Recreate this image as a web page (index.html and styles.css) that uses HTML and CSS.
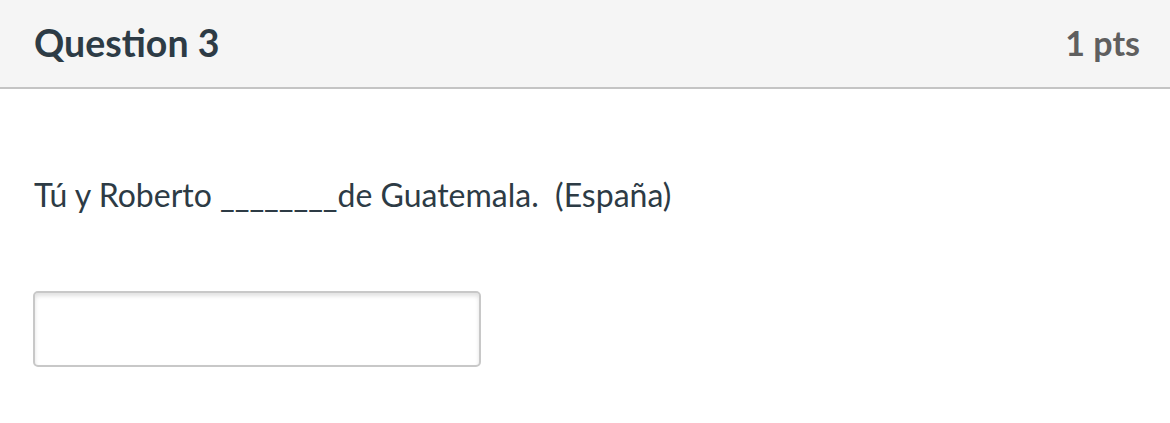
FILE: index.html
```html
<!DOCTYPE html>
<html>
<head>
<meta charset="utf-8">
<link rel="stylesheet" href="styles.css">
</head>
<body>
<div class="question">
  <div class="header">
    <h2 class="title">Question 3</h2>
    <div class="points">1 pts</div>
  </div>
  <div class="content">
    <p class="text">Tú y Roberto ________de Guatemala.&nbsp; (España)</p>
    <input class="answer" type="text">
  </div>
</div>
</body>
</html>
```
FILE: styles.css
```css
html, body {
  margin: 0;
  padding: 0;
  background: #fff;
  font-family: Lato, "Open Sans", sans-serif;
}
.question {
  width: 1170px;
}
.header {
  display: flex;
  justify-content: space-between;
  align-items: center;
  padding: 0 30px 0 34px;
  background: #f5f5f5;
  border-bottom: 2px solid #c4c4c4;
  box-sizing: border-box;
  height: 89px;
}
.title {
  margin: 0;
  font-size: 37.5px;
  font-weight: 700;
  color: #2d3b45;
  padding-bottom: 2px;
}
.points {
  font-size: 34px;
  font-weight: 700;
  color: #5f5f5f;
  padding-bottom: 2px;
}
.content {
  padding: 0 34px;
}
.text {
  margin: 0;
  padding-top: 86px;
  font-size: 32px;
  color: #2d3b45;
  line-height: 40px;
}
.answer {
  display: block;
  margin-top: 76px;
  margin-left: -1px;
  width: 448px;
  height: 76px;
  box-sizing: border-box;
  border: 2px solid #c8c8c8;
  border-radius: 5px;
  box-shadow: inset 0 3px 4px rgba(0,0,0,0.12);
  background: #fff;
  outline: none;
}
```
